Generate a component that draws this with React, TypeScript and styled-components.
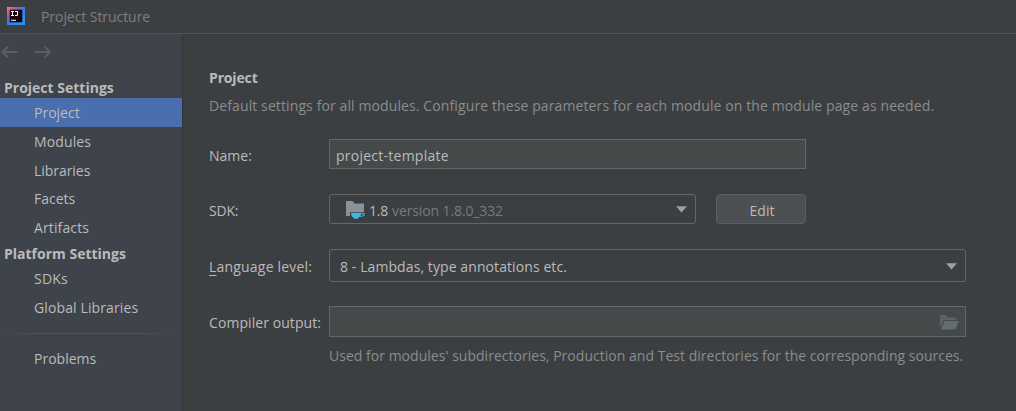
import React from 'react';
import styled, { createGlobalStyle } from 'styled-components';

const Global = createGlobalStyle`
  * { box-sizing: border-box; }
  body {
    margin: 0;
    background: #3c3f41;
    color: #bbbbbb;
    font: 14px/20px "Open Sans", "Noto Sans", sans-serif;
    overflow: hidden;
  }
`;

const Label = styled.span<{ $track?: number }>`
  white-space: pre;
  letter-spacing: ${(p) => p.$track ?? 0}px;
`;

const Title = styled(Label)`
  padding-top: 2px;
`;

const Muted = styled(Label)`
  color: #8a8c8d;
`;

const SdkName = styled(Label)`
  margin-left: 3px;
`;

const SdkVersion = styled(Label)`
  margin-left: 4px;
  color: #777a7b;
`;

const Window = styled.div`
  width: 1016px;
  height: 411px;
  display: flex;
  flex-direction: column;
`;

const TitleBar = styled.header`
  height: 34px;
  flex: none;
  display: flex;
  align-items: center;
  gap: 16px;
  padding: 0 0 1px 7px;
  border-bottom: 1px solid #515354;
  color: #7d7f80;
`;

const Body = styled.div`
  flex: 1;
  display: flex;
`;

const Sidebar = styled.nav`
  width: 183px;
  flex: none;
  background: #3e434c;
  border-right: 1px solid #323435;
`;

const History = styled.div`
  height: 44px;
  padding: 10px 0 0;
  display: flex;
  gap: 15px;
`;

const Group = styled.div<{ $height: number }>`
  height: ${(p) => p.$height}px;
  padding-left: 4px;
  display: flex;
  align-items: flex-end;
  font-weight: 700;
`;

const Item = styled.div<{ $height?: number; $selected?: boolean }>`
  height: ${(p) => p.$height ?? 29}px;
  width: 182px;
  padding-left: 34px;
  display: flex;
  align-items: center;
  background: ${(p) => (p.$selected ? '#4b6eaf' : 'transparent')};
`;

const Separator = styled.div`
  height: 1px;
  margin: 11px 8px 10px 2px;
  background: linear-gradient(90deg, transparent, #515457 20%, #515457 80%, transparent);
`;

const Content = styled.main`
  flex: 1;
  padding: 34px 0 0 26px;
  display: flex;
  flex-direction: column;
`;

const Heading = styled.h1`
  margin: 0 0 8px;
  font-size: 14px;
  line-height: 20px;
  height: 20px;
`;

const Row = styled.div<{ $top: number; $height: number }>`
  margin-top: ${(p) => p.$top}px;
  height: ${(p) => p.$height}px;
  display: flex;
  align-items: center;
`;

const Caption = styled.label`
  width: 120px;
  flex: none;
  padding-top: 3px;
`;

const Mnemonic = styled.span`
  text-decoration: underline;
  text-underline-offset: 3px;
`;

const Field = styled.div<{ $width: number; $filled?: boolean; $pad: number; $end?: number }>`
  width: ${(p) => p.$width}px;
  height: 100%;
  display: flex;
  align-items: center;
  padding: 3px ${(p) => p.$end ?? 8}px 0 ${(p) => p.$pad}px;
  border: 1px solid #646667;
  border-radius: ${(p) => (p.$filled ? 0 : 3)}px;
  background: ${(p) => (p.$filled ? '#45494a' : '#3c3f41')};
`;

const Spacer = styled.span`
  flex: 1;
`;

const Button = styled.button`
  width: 90px;
  height: 30px;
  margin-left: 20px;
  padding: 3px 0 0 2px;
  border: 1px solid #5e6060;
  border-radius: 4px;
  background: #4c5052;
  color: inherit;
  font: inherit;
`;

const Hint = styled.div`
  margin: 9px 0 0 120px;
`;

const CaretSvg = styled.svg`
  margin-top: -2px;
`;

const SdkSvg = styled.svg`
  margin-top: -2px;
`;

const FolderSvg = styled.svg`
  margin-top: -1px;
`;

const Logo = () => (
  <svg width="18" height="18" viewBox="0 0 18 18">
    <defs>
      <linearGradient id="edge" x1="0" y1="0" x2="1" y2="1">
        <stop offset="0" stopColor="#fd9a3c" />
        <stop offset=".14" stopColor="#f5586c" />
        <stop offset=".3" stopColor="#b450b4" />
        <stop offset=".46" stopColor="#3a78ee" />
        <stop offset="1" stopColor="#1d9cf5" />
      </linearGradient>
    </defs>
    <rect width="18" height="18" fill="url(#edge)" />
    <rect x="2.700" y="2.700" width="12.600" height="12.600" fill="#14060f" />
    <path
      d="M4 4.500h3M5.500 4.500v4M4 8.500h3M8 4.500h2.500v3.200q0 .8-.8.8H8M4 13.200h5"
      fill="none"
      stroke="#fff"
      strokeWidth="1.100"
    />
  </svg>
);

const Arrow = ({ back }: { back?: boolean }) => (
  <svg width="19" height="16" viewBox="0 0 19 16">
    <path
      d={back ? 'M17.500 8H2.500M8 2.500L2.500 8L8 13.500' : 'M.5 8H15.500M10.500 2.500L16 8L10.500 13.500'}
      fill="none"
      stroke="#5b5d5e"
      strokeWidth="2.100"
    />
  </svg>
);

const Caret = () => (
  <CaretSvg width="11" height="7" viewBox="0 0 11 7">
    <path d="M0 0.300h11L5.500 6.500z" fill="#9da0a2" />
  </CaretSvg>
);

const SdkIcon = () => (
  <SdkSvg width="21" height="20" viewBox="0 0 21 20">
    <path d="M1 1h6.500l2 2.500H19V12.200H5V16H1z" fill="#87939a" />
    <path d="M6 13h10.200q0 3.400-3.200 5.100v.7H9v-.7Q6 16.400 6 13z" fill="#40b6e0" />
    <path d="M15.500 13.700h3.800q.2 2.500-4.300 2.800" fill="none" stroke="#40b6e0" strokeWidth="1.100" />
  </SdkSvg>
);

const FolderIcon = () => (
  <FolderSvg width="19" height="15" viewBox="0 0 19 15">
    <path d="M0 0h6l2 2.500h8.500V5H4L0 12.500z" fill="#5a6468" />
    <path d="M4.700 6H19l-3.700 8.500H0.800z" fill="#636d71" />
  </FolderSvg>
);

export default function App() {
  return (
    <Window>
      <Global />
      <TitleBar>
        <Logo />
        <Title $track={-0.06}>Project Structure</Title>
      </TitleBar>
      <Body>
        <Sidebar>
          <History>
            <Arrow back />
            <Arrow />
          </History>
          <Group $height={20}><Label>Project Settings</Label></Group>
          <Item $selected><Label>Project</Label></Item>
          <Item><Label $track={0.12}>Modules</Label></Item>
          <Item><Label $track={-0.05}>Libraries</Label></Item>
          <Item $height={28}><Label>Facets</Label></Item>
          <Item><Label $track={0.12}>Artifacts</Label></Item>
          <Group $height={22}><Label>Platform Settings</Label></Group>
          <Item><Label $track={0.2}>SDKs</Label></Item>
          <Item><Label $track={0.12}>Global Libraries</Label></Item>
          <Separator />
          <Item><Label>Problems</Label></Item>
        </Sidebar>
        <Content>
          <Heading><Label $track={-0.15}>Project</Label></Heading>
          <Muted $track={0.108}>Default settings for all modules. Configure these parameters for each module on the module page as needed.</Muted>
          <Row $top={23} $height={30}>
            <Caption><Label>Name:</Label></Caption>
            <Field $width={477} $filled $pad={6}><Label $track={0.25}>project-template</Label></Field>
          </Row>
          <Row $top={25} $height={30}>
            <Caption><Label $track={-0.2}>SDK:</Label></Caption>
            <Field $width={367} $pad={15}>
              <SdkIcon />
              <SdkName $track={-0.2}>1.8</SdkName>
              <SdkVersion $track={-0.12}>version 1.8.0_332</SdkVersion>
              <Spacer />
              <Caret />
            </Field>
            <Button><Label>Edit</Label></Button>
          </Row>
          <Row $top={25} $height={33}>
            <Caption><Label $track={0.2}><Mnemonic>L</Mnemonic>anguage level:</Label></Caption>
            <Field $width={637} $pad={10}>
              <Label $track={0.09}>8 - Lambdas, type annotations etc.</Label>
              <Spacer />
              <Caret />
            </Field>
          </Row>
          <Row $top={24} $height={31}>
            <Caption><Label $track={0.07}>Compiler output:</Label></Caption>
            <Field $width={637} $filled $pad={7} $end={6}>
              <Spacer />
              <FolderIcon />
            </Field>
          </Row>
          <Hint><Muted $track={0.022}>Used for modules' subdirectories, Production and Test directories for the corresponding sources.</Muted></Hint>
        </Content>
      </Body>
    </Window>
  );
}
